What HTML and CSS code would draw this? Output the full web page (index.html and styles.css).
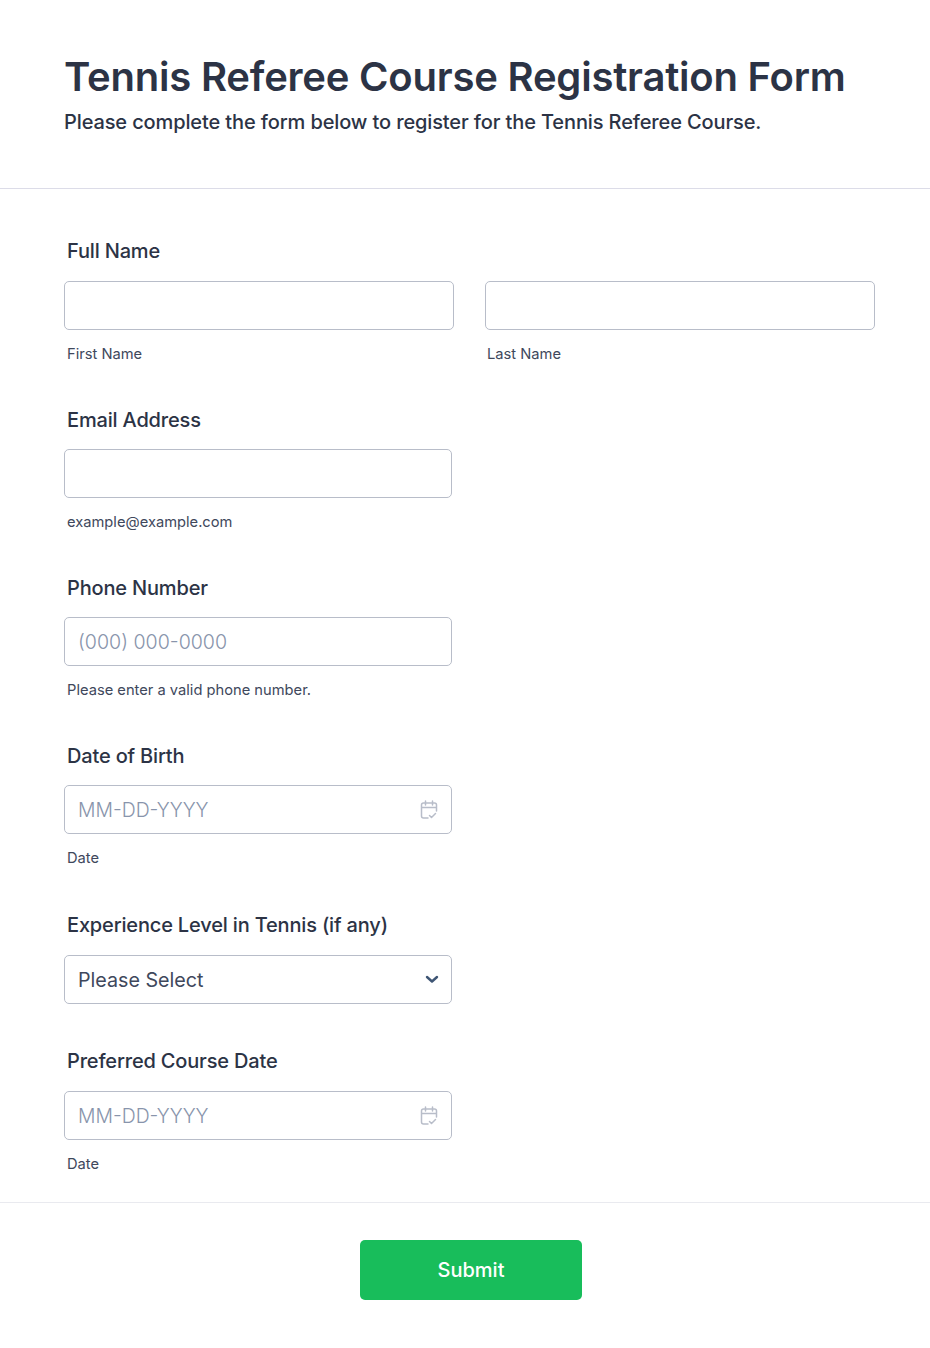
FILE: index.html
```html
<!DOCTYPE html>
<html lang="en">
<head>
    <meta charset="UTF-8">
    <title>Tennis Referee Course Registration Form</title>
    <link rel="stylesheet" href="styles.css">
</head>
<body>
    <form class="form">
        <header class="form-header">
            <h1 class="form-title">Tennis Referee Course Registration Form</h1>
            <p class="form-subtitle">Please complete the form below to register for the Tennis Referee Course.</p>
        </header>

        <div class="form-body">
            <div class="field field-name">
                <label class="field-label">Full Name</label>
                <div class="name-row">
                    <div class="name-col">
                        <input class="input" type="text">
                        <span class="hint">First Name</span>
                    </div>
                    <div class="name-col">
                        <input class="input" type="text">
                        <span class="hint">Last Name</span>
                    </div>
                </div>
            </div>

            <div class="field">
                <label class="field-label">Email Address</label>
                <input class="input" type="text">
                <span class="hint">example@example.com</span>
            </div>

            <div class="field">
                <label class="field-label">Phone Number</label>
                <input class="input" type="text" placeholder="(000) 000-0000">
                <span class="hint">Please enter a valid phone number.</span>
            </div>

            <div class="field">
                <label class="field-label">Date of Birth</label>
                <div class="input-wrap">
                    <input class="input" type="text" placeholder="MM-DD-YYYY">
                    <svg class="cal-icon" width="18" height="20" viewBox="0 0 18 20" fill="none">
                        <path d="M8 18H3.500C2.400 18 1.500 17.100 1.500 16V5C1.500 3.900 2.400 3 3.500 3H14.500C15.600 3 16.500 3.900 16.500 5V11M1.500 7.500H16.500M5.500 1V5M12.500 1V5M9.500 15.500L11.500 17.500L15.500 13.500" stroke="#b8bdc9" stroke-width="1.500" stroke-linecap="round" stroke-linejoin="round"/>
                    </svg>
                </div>
                <span class="hint">Date</span>
            </div>

            <div class="field field-select">
                <label class="field-label">Experience Level in Tennis (if any)</label>
                <div class="input-wrap">
                    <div class="select">Please Select</div>
                    <svg class="chevron" width="14" height="9" viewBox="0 0 14 9" fill="none">
                        <path d="M2 2L7 6.500L12 2" stroke="#3e5574" stroke-width="2.400" stroke-linecap="round" stroke-linejoin="round"/>
                    </svg>
                </div>
            </div>

            <div class="field field-course">
                <label class="field-label">Preferred Course Date</label>
                <div class="input-wrap">
                    <input class="input" type="text" placeholder="MM-DD-YYYY">
                    <svg class="cal-icon" width="18" height="20" viewBox="0 0 18 20" fill="none">
                        <path d="M8 18H3.500C2.400 18 1.500 17.100 1.500 16V5C1.500 3.900 2.400 3 3.500 3H14.500C15.600 3 16.500 3.900 16.500 5V11M1.500 7.500H16.500M5.500 1V5M12.500 1V5M9.500 15.500L11.500 17.500L15.500 13.500" stroke="#b8bdc9" stroke-width="1.500" stroke-linecap="round" stroke-linejoin="round"/>
                    </svg>
                </div>
                <span class="hint">Date</span>
            </div>
        </div>

        <div class="form-footer">
            <button class="submit-btn" type="button">Submit</button>
        </div>
    </form>
</body>
</html>
```

FILE: styles.css
```css
* {
    box-sizing: border-box;
}

body {
    margin: 0;
    background: #fff;
    font-family: 'Inter', sans-serif;
    color: #2c3345;
}

.form {
    min-height: 1348px;
}

/* Header */
.form-header {
    height: 189px;
    padding: 52px 55px 0 64px;
    border-bottom: 1px solid #dcdce8;
}

.form-title {
    margin: 0;
    font-size: 40px;
    line-height: 50px;
    font-weight: 600;
    letter-spacing: -0.21px;
}

.form-subtitle {
    margin: 5px 0 0;
    font-size: 20px;
    line-height: 30px;
    font-weight: 500;
    letter-spacing: -0.12px;
}

/* Fields */
.form-body {
    padding: 49px 55px 0 64px;
}

.field {
    width: 388px;
    margin-bottom: 43px;
}

.field-name {
    width: 811px;
}

.field-select {
    margin-top: 44px;
    margin-bottom: 44px;
}

.field-name .field-label,
.field-select .field-label,
.field-course .field-label {
    margin-bottom: 17px;
}

.field-label {
    display: block;
    margin: 0 0 16px 3px;
    font-size: 20px;
    line-height: 26px;
    font-weight: 500;
    letter-spacing: -0.17px;
}

.name-row {
    display: grid;
    grid-template-columns: 390px 390px;
    gap: 31px;
}

.input {
    display: block;
    width: 100%;
    height: 49px;
    padding: 0 48px 0 13px;
    border: 1px solid #b8bdc9;
    border-radius: 5px;
    background: #fff;
    font-family: inherit;
    font-size: 19.600px;
    color: #2c3345;
}

.input::placeholder {
    color: #8894ab;
    font-weight: 300;
    opacity: 1;
}

.input-wrap .input {
    font-size: 19.400px;
}

.hint {
    display: block;
    margin: 15px 0 0 3px;
    font-size: 14.700px;
    line-height: 19px;
    color: #40485c;
}

.name-col + .name-col .hint {
    margin-left: 2px;
}

.input-wrap {
    position: relative;
}

.cal-icon {
    position: absolute;
    top: 15px;
    right: 14px;
}

.select {
    height: 49px;
    padding: 0 13px;
    border: 1px solid #b8bdc9;
    border-radius: 5px;
    font-size: 19.700px;
    line-height: 49px;
    color: #40485c;
}

.chevron {
    position: absolute;
    top: 20px;
    right: 13px;
}

/* Footer */
.form-footer {
    display: flex;
    justify-content: center;
    margin-top: -15px;
    padding: 37px 0 0 12px;
    border-top: 1px solid #e9eaef;
}

.submit-btn {
    width: 222px;
    height: 60px;
    border: 0;
    border-radius: 5px;
    background: #18bd5b;
    color: #fff;
    font-family: inherit;
    font-size: 20px;
    font-weight: 500;
}
```
